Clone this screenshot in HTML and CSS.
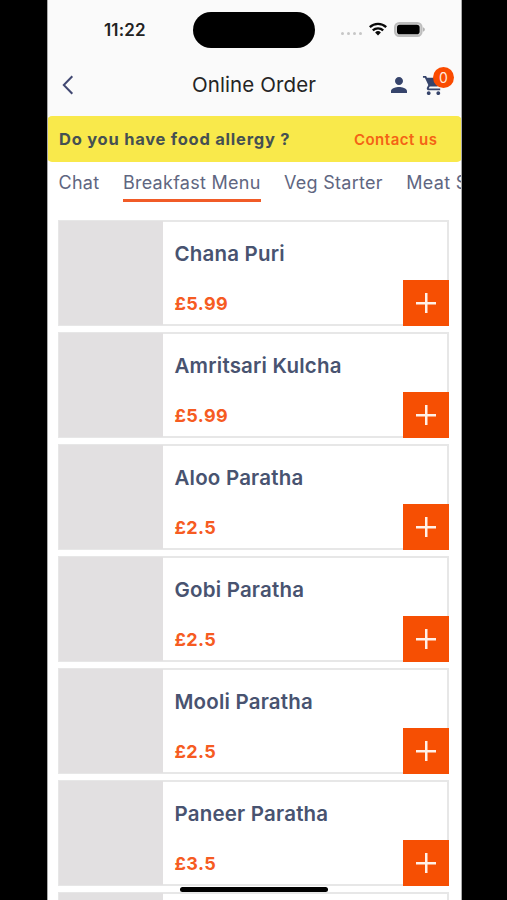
FILE: index.html
```html
<!DOCTYPE html>
<html lang="en">
<head>
<meta charset="utf-8">
<title>Online Order</title>
<link rel="stylesheet" href="styles.css">
</head>
<body>
<div class="phone">
  <header class="top">
    <div class="status">
      <span class="time">11:22</span>
      <span class="island"></span>
      <span class="signal"><i></i><i></i><i></i><i></i></span>
      <svg class="wifi" width="18" height="14" viewBox="0 0 18 14"><g fill="none" stroke="#080808" stroke-width="2.3"><path d="M.8 5.2a11.8 11.8 0 0 1 16.4 0"/><path d="M3.8 8.4a7.5 7.5 0 0 1 10.4 0"/></g><path d="M9 13.4 6.1 10.5a4.1 4.1 0 0 1 5.8 0z" fill="#080808"/></svg>
      <svg class="battery" width="31" height="15" viewBox="0 0 31 15"><rect x="1" y="1" width="26.600" height="13" rx="4.2" fill="#d4d4d4" stroke="#bdbdbd" stroke-width="2"/><rect x="3" y="2.800" width="22.600" height="9.400" rx="2.8"/><path d="M29.2 5.3c2 .8 2 3.6 0 4.4z" fill="#a5a5a5"/></svg>
    </div>
    <nav class="bar">
      <svg class="back" width="12" height="20" viewBox="0 0 12 20"><path d="M10.3 1.3 1.8 10l8.5 8.7" fill="none" stroke="#414872" stroke-width="2"/></svg>
      <h1>Online Order</h1>
      <svg class="user" width="24" height="24" viewBox="0 0 24 24"><path fill="#36446b" d="M12 12c2.21 0 4-1.79 4-4s-1.79-4-4-4-4 1.79-4 4 1.79 4 4 4zm0 2c-2.67 0-8 1.34-8 4v2h16v-2c0-2.66-5.33-4-8-4z"/></svg>
      <span class="cart">
        <svg width="23" height="23" viewBox="0 0 24 24"><path fill="#36446b" d="M7 18c-1.1 0-1.99.9-1.99 2S5.900 22 7 22s2-.9 2-2-.9-2-2-2zM1 2v2h2l3.600 7.590-1.350 2.450c-.16.28-.25.61-.25.96 0 1.100.9 2 2 2h12v-2H7.420c-.14 0-.25-.11-.25-.25l.03-.12.9-1.630h7.450c.75 0 1.410-.41 1.750-1.030l3.580-6.490A1 1 0 0 0 20 4H5.210l-.94-2H1zm16 16c-1.100 0-1.990.9-1.990 2s.89 2 1.990 2 2-.9 2-2-.9-2-2-2z"/></svg>
        <b class="badge">0</b>
      </span>
    </nav>
  </header>
  <section class="allergy"><span class="question">Do you have food allergy ?</span><a class="contact">Contact us</a></section>
  <nav class="tabs"><a>Chat</a><a class="active">Breakfast Menu</a><a>Veg Starter</a><a>Meat Starter</a></nav>
  <main class="list">
    <article class="card"><div class="photo"></div><div class="info"><h2>Chana Puri</h2><p>£5.99</p></div><button aria-label="Add"></button></article>
    <article class="card"><div class="photo"></div><div class="info"><h2>Amritsari Kulcha</h2><p>£5.99</p></div><button aria-label="Add"></button></article>
    <article class="card"><div class="photo"></div><div class="info"><h2>Aloo Paratha</h2><p>£2.5</p></div><button aria-label="Add"></button></article>
    <article class="card"><div class="photo"></div><div class="info"><h2>Gobi Paratha</h2><p>£2.5</p></div><button aria-label="Add"></button></article>
    <article class="card"><div class="photo"></div><div class="info"><h2>Mooli Paratha</h2><p>£2.5</p></div><button aria-label="Add"></button></article>
    <article class="card"><div class="photo"></div><div class="info"><h2>Paneer Paratha</h2><p>£3.5</p></div><button aria-label="Add"></button></article>
    <article class="card"><div class="photo"></div></article>
  </main>
  <div class="home"></div>
</div>
</body>
</html>
```
FILE: styles.css
```css
* { box-sizing: border-box; }
body { margin: 0; background: #000; height: 900px; overflow: hidden; font-family: Inter, "Liberation Sans", sans-serif; }
h1, h2, p { margin: 0; }
.phone { position: relative; width: 415px; height: 900px; margin-left: 46.5px; background: #fff; overflow: hidden; border-left: 1px solid #aaa; border-right: 1px solid #aaa; }
.top { height: 116px; background: #fafafa; }
.status { display: flex; align-items: center; height: 59px; padding-left: 56.5px; }
.time { width: 89px; font-size: 17px; font-weight: 600; letter-spacing: .15px; color: #222; }
.island { width: 121.500px; height: 36px; border-radius: 18px; background: #000; }
.signal { display: flex; gap: 2.500px; margin: 8px 0 0 26px; width: 28.500px; }
.signal i { width: 3.500px; height: 3.500px; border-radius: 50%; background: #c6c6c6; }
.wifi { margin-top: -2px; }
.battery { margin-left: 7px; }
.bar { display: flex; align-items: center; height: 52px; padding-left: 14px; }
.back { margin-right: 118.500px; }
h1 { width: 194.500px; font-size: 20.500px; font-weight: 400; line-height: 24px; letter-spacing: .1px; color: #242424; white-space: nowrap; }
.cart { position: relative; width: 23px; height: 23px; margin-left: 11px; }
.cart svg { display: block; }
.badge { position: absolute; left: 11.500px; top: -7px; width: 21px; height: 21px; border-radius: 50%; background: #fa4b00; color: #ffe9df; font-size: 14px; font-weight: 400; line-height: 21px; text-align: center; }
.allergy { display: flex; align-items: center; justify-content: space-between; height: 46px; margin: 0 -1px; padding: 0 24px 0 12.500px; border-radius: 5px; background: #f9e94b; white-space: nowrap; }
.question { font-size: 16.500px; font-weight: 700; letter-spacing: .75px; color: #455052; }
.contact { font-size: 15px; font-weight: 600; letter-spacing: .5px; color: #f46315; }
.tabs { display: flex; gap: 23.500px; height: 58px; padding: 6px 0 0 11px; }
.tabs a { flex: none; height: 34px; font-size: 18px; line-height: 30px; letter-spacing: .27px; color: #606681; white-space: nowrap; }
.tabs .active { border-bottom: 3px solid #f15b27; }
.list { display: flex; flex-direction: column; gap: 6px; padding: 0 11.500px 0 10.500px; }
.card { display: flex; flex: none; height: 106px; border: 2px solid #e7e7e7; background: #fff; }
.photo { width: 104px; margin: -1px 0 -1px -1px; background: #e2e0e1; }
.info { flex: 1; padding: 18px 0 0 11.500px; white-space: nowrap; }
h2 { font-size: 20.500px; font-weight: 600; line-height: 28px; letter-spacing: .2px; color: #485370; }
.info p { margin-top: 23px; font-size: 18px; font-weight: 700; line-height: 26px; letter-spacing: .35px; color: #f65b22; }
button { align-self: flex-end; width: 46px; height: 46px; margin: 0 -2px -2px 0; padding: 0; border: 0; background: linear-gradient(#fff0e8, #fff0e8) center / 20px 2.500px no-repeat, linear-gradient(#fff0e8, #fff0e8) center / 2.500px 20px no-repeat, #f64f03; }
.home { position: absolute; left: 132.500px; top: 887px; width: 148px; height: 5px; border-radius: 3px; background: #000; }
```
